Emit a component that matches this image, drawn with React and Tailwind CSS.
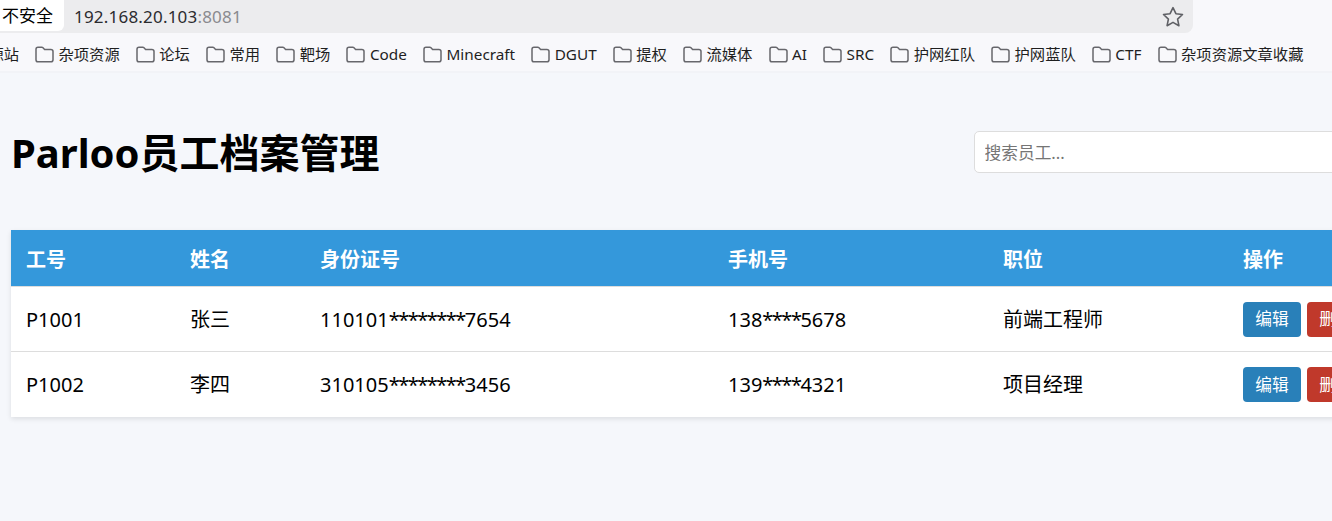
import React from 'react';

const bookmarks = ['杂项资源', '论坛', '常用', '靶场', 'Code', 'Minecraft', 'DGUT', '提权', '流媒体', 'AI', 'SRC', '护网红队', '护网蓝队', 'CTF', '杂项资源文章收藏'];

const employees = [
  { id: 'P1001', name: '张三', cardHead: '110101', cardMask: '********', cardTail: '7654', phoneHead: '138', phoneMask: '****', phoneTail: '5678', title: '前端工程师' },
  { id: 'P1002', name: '李四', cardHead: '310105', cardMask: '********', cardTail: '3456', phoneHead: '139', phoneMask: '****', phoneTail: '4321', title: '项目经理' },
];

function FolderIcon() {
  return (
    <svg width="19" height="17" viewBox="0 0 19 17" fill="none" stroke="#67676c" strokeWidth="1.5" strokeLinejoin="round" className="shrink-0">
      <path d="M1 3.2C1 2 1.9 1.2 3 1.2h3.8c.5 0 .9.2 1.2.5l1.6 1.7h6.2c1.2 0 2.2.9 2.2 2.1v8.2c0 1.2-1 2.1-2.2 2.1H3c-1.1 0-2-.9-2-2.1V3.2Z" />
    </svg>
  );
}

export default function App() {
  return (
    <div className="w-[1332px] h-[521px] overflow-hidden bg-[#f5f7fb] text-black font-['Noto_Sans','Noto_Sans_CJK_SC',sans-serif]">
      <div className="h-[33px] bg-[#f8f8fb]">
        <div className="w-[1193px] h-[33px] bg-[#ececee] rounded-br-lg flex items-center">
          <div className="w-[64px] h-[31px] -mt-[2px] bg-white rounded-br-md flex items-center pl-[2px] text-[17px] leading-none">不安全</div>
          <div className="ml-[10px] text-[17px] leading-none tracking-[0.2px] text-[#2b2b2f]">
            192.168.20.103<span className="text-[#8a8a8e]">:8081</span>
          </div>
          <svg width="24" height="24" viewBox="0 0 24 24" fill="none" stroke="#5f6065" strokeWidth="1.6" strokeLinejoin="round" className="ml-auto mr-[8px]">
            <path d="M12 2.6l2.9 6.1 6.6.8-4.9 4.6 1.3 6.6L12 17.4l-5.9 3.3 1.3-6.6-4.9-4.6 6.6-.8L12 2.6Z" />
          </svg>
        </div>
      </div>

      <div className="h-[40px] pt-[5px] bg-[#f8f8fb] border-b-[2px] border-[#f2f3f7] flex items-center text-[15.3px] leading-none text-[#1f1f1f] whitespace-nowrap">
        <span className="-ml-[11.6px] mr-4">源站</span>
        <div className="flex items-center gap-[16.1px]">
          {bookmarks.map((name) => (
            <div key={name} className="flex items-center gap-[4.5px]">
              <FolderIcon />
              <span>{name}</span>
            </div>
          ))}
        </div>
      </div>

      <div className="pl-[11px] w-[1600px]">
        <div className="flex items-center h-[157px]">
          <h1 className="mt-[2px] text-[40px] leading-none font-bold">Parloo员工档案管理</h1>
          <input
            placeholder="搜索员工..."
            className="ml-[594px] w-[400px] h-[42px] bg-white border border-[#dddddd] rounded-[5px] px-[10px] pt-[1px] text-[16.7px] placeholder:text-[#757575] outline-none"
          />
        </div>

        <table className="table-fixed w-[1400px] bg-white border-separate border-spacing-0 shadow-[0_2px_5px_rgba(0,0,0,0.1)] text-[20px]">
          <colgroup>
            <col className="w-[164px]" />
            <col className="w-[130px]" />
            <col className="w-[408px]" />
            <col className="w-[275px]" />
            <col className="w-[240px]" />
            <col />
          </colgroup>
          <thead>
            <tr className="h-[57px] bg-[#3498db] text-white">
              {['工号', '姓名', '身份证号', '手机号', '职位', '操作'].map((h) => (
                <th key={h} className="px-[15px] pt-[3px] text-left font-bold border-b border-[#dddddd]">{h}</th>
              ))}
            </tr>
          </thead>
          <tbody>
            {employees.map((emp, i) => {
              const border = i === 0 ? 'border-b border-[#dddddd]' : '';
              const cell = i === 0 ? `px-[15px] pt-[2px] ${border}` : 'px-[15px]';
              return (
                <tr key={emp.id} className="h-[65px]">
                  <td className={cell}>{emp.id}</td>
                  <td className={cell}>{emp.name}</td>
                  <td className={cell}>
                    {emp.cardHead}<span className="tracking-[-1.5px]">{emp.cardMask}</span>{emp.cardTail}
                  </td>
                  <td className={cell}>
                    {emp.phoneHead}<span className="tracking-[-1.5px]">{emp.phoneMask}</span>{emp.phoneTail}
                  </td>
                  <td className={cell}>{emp.title}</td>
                  <td className={`px-[15px] ${border}`}>
                    <div className="flex gap-[6px]">
                      <button className="w-[58px] h-[35px] bg-[#2980b9] text-white rounded-[4px] text-[16.7px]">编辑</button>
                      <button className="w-[58px] h-[35px] bg-[#c0392b] text-white rounded-[4px] text-[16.7px]">删除</button>
                    </div>
                  </td>
                </tr>
              );
            })}
          </tbody>
        </table>
      </div>
    </div>
  );
}
